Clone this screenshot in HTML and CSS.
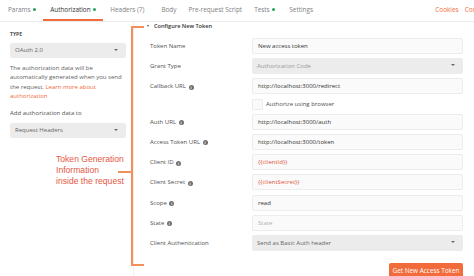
FILE: index.html
```html
<!DOCTYPE html>
<html lang="en">
  <head>
    <meta charset="UTF-8" />
    <meta name="viewport" content="width=device-width, initial-scale=1.0" />
    <title>Authorization</title>
    <link rel="stylesheet" href="styles.css">
  </head>
  <body>
    <div class="tabs">
      <ul class="tab_list">
        <li>Params <span class="dot"></span></li>
        <li class="on">Authorization <span class="dot"></span></li>
        <li>Headers (7)</li>
        <li>Body</li>
        <li>Pre-request Script</li>
        <li>Tests <span class="dot"></span></li>
        <li>Settings</li>
      </ul>
      <div class="tab_links">
        <a href="">Cookies</a>
        <a href="">Code</a>
      </div>
    </div>

    <div class="main">
      <aside class="auth_side">
        <p class="side_title">TYPE</p>
        <div class="select">OAuth 2.0</div>
        <p class="side_text">
          The authorization data will be automatically generated when you send
          the request. <a href="">Learn more about authorization</a>
        </p>
        <p class="side_label">Add authorization data to</p>
        <div class="select">Request Headers</div>
      </aside>

      <section class="token">
        <h2 class="token_head"><span class="caret"></span>Configure New Token</h2>
        <div class="token_form">
          <label>Token Name</label>
          <div class="field">New access token</div>

          <label>Grant Type</label>
          <div class="select dim">Authorization Code</div>

          <label>Callback URL <i class="info">i</i></label>
          <div class="field">http://localhost:3000/redirect</div>

          <span></span>
          <div class="check"><span class="box"></span>Authorize using browser</div>

          <label>Auth URL <i class="info">i</i></label>
          <div class="field">http://localhost:3000/auth</div>

          <label>Access Token URL <i class="info">i</i></label>
          <div class="field">http://localhost:3000/token</div>

          <label>Client ID <i class="info">i</i></label>
          <div class="field var">{{clientId}}</div>

          <label>Client Secret <i class="info">i</i></label>
          <div class="field var">{{clientSecret}}</div>

          <label>Scope <i class="info">i</i></label>
          <div class="field">read</div>

          <label>State <i class="info">i</i></label>
          <div class="field empty">State</div>

          <label>Client Authentication</label>
          <div class="select">Send as Basic Auth header</div>
        </div>
        <div class="token_foot">
          <button class="get_btn">Get New Access Token</button>
        </div>
      </section>

      <!-- annotation on top of the screenshot -->
      <div class="bracket"></div>
      <p class="note">Token Generation<br />Information<br />inside the request</p>
    </div>
  </body>
</html>
```

FILE: styles.css
```css
* {
  margin: 0;
  padding: 0;
  box-sizing: border-box;
}
li {
  list-style: none;
}
a {
  text-decoration: none;
}
body {
  font-family: "Open Sans", sans-serif;
  font-size: 6px;
  color: #505050;
  background: #fff;
  overflow: hidden;
}

/* tabs */
.tabs {
  height: 22px;
  display: flex;
  justify-content: space-between;
  border-bottom: 1px solid #ededed;
}
.tab_list {
  display: flex;
  padding-left: 1px;
}
.tab_list li {
  padding: 0 7px;
  line-height: 19px;
  height: 21px;
  font-size: 6.4px;
  color: #808080;
  border-bottom: 2px solid transparent;
}
.tab_list li.on {
  color: #333;
  border-bottom-color: #f26b3a;
}
.tab_list li:nth-child(3) {
  margin-right: 3px;
}
.tab_list li:nth-child(4) {
  margin-right: -2px;
}
.tab_list li:nth-child(5) {
  margin-right: -2px;
}
.tab_list li .dot {
  display: inline-block;
  width: 3px;
  height: 3px;
  border-radius: 50%;
  background: #26a35b;
  margin-left: 1px;
  vertical-align: 1px;
}
.tab_links {
  display: flex;
  gap: 6px;
  margin-right: -6px;
}
.tab_links a {
  font-size: 6.4px;
  line-height: 19px;
  color: #f26b3a;
}

/* layout */
.main {
  position: relative;
  display: flex;
  height: 254px;
}

/* left side */
.auth_side {
  width: 134px;
  padding: 9px 7px 0 10px;
  border-right: 1px solid #f0f0f0;
}
.side_title {
  font-size: 5px;
  font-weight: 700;
  color: #505050;
  line-height: 7px;
}
.select {
  position: relative;
  height: 15px;
  line-height: 15px;
  padding-left: 5px;
  background: #ececec;
  border-radius: 2px;
  color: #666;
}
.select::after {
  content: "";
  position: absolute;
  right: 8px;
  top: 6px;
  border-left: 2px solid transparent;
  border-right: 2px solid transparent;
  border-top: 2.5px solid #666;
}
.auth_side .select {
  margin-top: 5px;
}
.side_text {
  margin-top: 6px;
  line-height: 9.3px;
  color: #606060;
}
.side_text a {
  color: #f26b3a;
}
.side_label {
  margin-top: 8px;
  line-height: 9px;
  color: #505050;
}

/* token form */
.token {
  padding: 0 11px 0 12px;
  width: 340px;
}
.token_head {
  font-size: 5.6px;
  font-weight: 600;
  color: #333;
  line-height: 8px;
  margin-bottom: 8px;
}
.caret {
  display: inline-block;
  border-left: 1.5px solid transparent;
  border-right: 1.5px solid transparent;
  border-top: 2.5px solid #555;
  margin: 0 5px 0 1px;
  vertical-align: 1px;
}
.token_form {
  display: grid;
  grid-template-columns: 102px 211px;
  row-gap: 4.2px;
  padding-left: 4px;
}
.token_form label {
  height: 16px;
  line-height: 16px;
  color: #505050;
}
.field {
  height: 16px;
  line-height: 14px;
  padding-left: 5px;
  background: #fafafa;
  border: 1px solid #ececec;
  border-radius: 2px;
  color: #333;
}
.field.var {
  color: #e0553a;
}
.field.empty {
  color: #b0b0b0;
}
.token_form .select {
  height: 16px;
  line-height: 16px;
}
.select.dim {
  color: #9a9a9a;
}
.info {
  display: inline-block;
  width: 5px;
  height: 5px;
  border-radius: 50%;
  background: #6f6f6f;
  color: #fff;
  font-size: 3.5px;
  font-style: normal;
  font-weight: 700;
  line-height: 5px;
  text-align: center;
  vertical-align: -0.5px;
  margin-left: 1px;
}
.check {
  height: 11px;
  display: flex;
  align-items: center;
  color: #505050;
}
.check .box {
  width: 11px;
  height: 11px;
  border: 1px solid #ececec;
  background: #fafafa;
  border-radius: 1px;
  margin-right: 3px;
}
.token_foot {
  display: flex;
  justify-content: flex-end;
  margin-top: 12px;
}
.get_btn {
  font-family: "Open Sans", sans-serif;
  font-size: 6.4px;
  color: #fff;
  background: #f26b3a;
  border: 0;
  border-radius: 2px;
  height: 16px;
  width: 74px;
}

/* annotation */
.bracket {
  position: absolute;
  left: 131px;
  top: 4px;
  width: 13px;
  height: 240px;
  border: 2px solid #f0905a;
  border-right: 0;
}
.bracket::before {
  content: "";
  position: absolute;
  left: -15px;
  top: 143px;
  width: 13px;
  height: 2px;
  background: #f0905a;
}
.note {
  position: absolute;
  left: 56px;
  top: 132px;
  font-family: "Liberation Sans", Arial, sans-serif;
  font-size: 8.6px;
  line-height: 11px;
  color: #e5583f;
}
```
